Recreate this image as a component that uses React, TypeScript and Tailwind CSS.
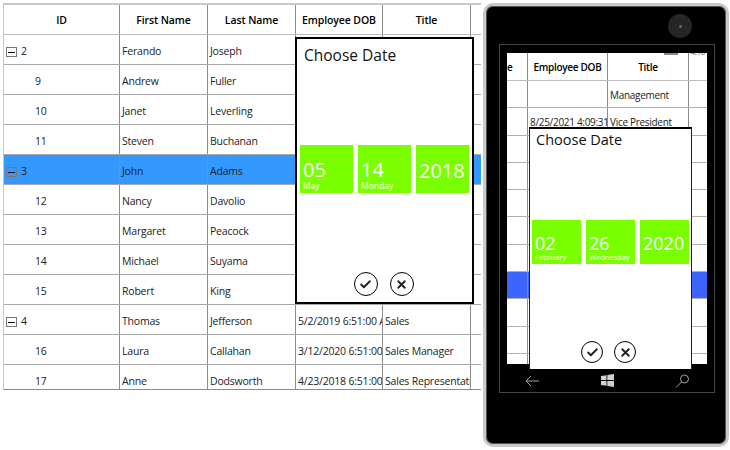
import { Check, X } from "lucide-react";

const rows = [
  { id: "2", first: "Ferando", last: "Joseph", dob: "", title: "", parent: true },
  { id: "9", first: "Andrew", last: "Fuller", dob: "", title: "" },
  { id: "10", first: "Janet", last: "Leverling", dob: "", title: "" },
  { id: "11", first: "Steven", last: "Buchanan", dob: "", title: "" },
  { id: "3", first: "John", last: "Adams", dob: "", title: "", parent: true, selected: true },
  { id: "12", first: "Nancy", last: "Davolio", dob: "", title: "" },
  { id: "13", first: "Margaret", last: "Peacock", dob: "", title: "" },
  { id: "14", first: "Michael", last: "Suyama", dob: "", title: "" },
  { id: "15", first: "Robert", last: "King", dob: "", title: "" },
  { id: "4", first: "Thomas", last: "Jefferson", dob: "5/2/2019 6:51:00 AM", title: "Sales", parent: true },
  { id: "16", first: "Laura", last: "Callahan", dob: "3/12/2020 6:51:00 AM", title: "Sales Manager" },
  { id: "17", first: "Anne", last: "Dodsworth", dob: "4/23/2018 6:51:00 AM", title: "Sales Representative" },
];

const phoneRows = [
  { title: "Management" },
  { dob: "8/25/2021 4:09:31 PM", title: "Vice President" },
  {},
  {},
  {},
  {},
  {},
  { selected: true },
  {},
  {},
  {},
];

function Cell({ className, children }: { className: string; children?: React.ReactNode }) {
  return (
    <div className={`flex h-full shrink-0 items-center overflow-hidden whitespace-nowrap border-r border-[#8c8c8c] pl-[2px] ${className}`}>
      {children}
    </div>
  );
}

function Tile({ value, label, size }: { value: string; label?: string; size: "lg" | "sm" }) {
  const big = size === "lg";
  return (
    <div className={`flex flex-col justify-end bg-[#7aff00] pl-[3px] text-white ${big ? "h-[48px] w-[53px] pb-[3px]" : "h-[44px] w-[49px] pb-[3px]"}`}>
      <span className={`leading-none ${label ? "" : "pb-[9px]"} ${big ? "text-[20px]" : "text-[18px]"}`}>{value}</span>
      {label && <span className={`mt-[2px] leading-none opacity-90 ${big ? "text-[8.5px]" : "text-[7.5px]"}`}>{label}</span>}
    </div>
  );
}

function RoundButton({ icon, size }: { icon: "check" | "x"; size: number }) {
  const box = size === 24 ? "h-6 w-6" : "h-[22px] w-[22px]";
  return (
    <button className={`flex items-center justify-center rounded-full border-[1.5px] border-black bg-white ${box}`}>
      {icon === "check" ? <Check size={13} strokeWidth={3.5} /> : <X size={13} strokeWidth={3.5} />}
    </button>
  );
}

function MainGrid() {
  return (
    <div className="relative ml-[3px] mt-[3px] h-[387px] w-[478px] shrink-0 overflow-hidden border-b border-l border-t-2 border-b-[#8c8c8c] border-l-[#c8c8c8] border-t-[#c8c8c8] text-[10.5px] tracking-[-0.2px] text-[#222]">
      <div className="flex h-[30px] items-center border-b border-[#bdbdbd] text-center font-semibold tracking-[-0.1px] text-black">
        <div className="h-full w-[116px] border-r border-[#8c8c8c] leading-[30px]">ID</div>
        <div className="h-full w-[88px] border-r border-[#8c8c8c] leading-[30px]">First Name</div>
        <div className="h-full w-[88px] border-r border-[#8c8c8c] leading-[30px]">Last Name</div>
        <div className="h-full w-[87px] border-r border-[#8c8c8c] leading-[30px]">Employee DOB</div>
        <div className="h-full w-[88px] border-r border-[#8c8c8c] leading-[30px]">Title</div>
      </div>
      {rows.map((r) => (
        <div key={r.id} className={`flex h-[30px] shrink-0 border-b border-[#a8a8a8] pt-[0px] ${r.selected ? "bg-[#3399ff]" : "bg-white"}`}>
          <div className={`flex h-full w-[116px] shrink-0 items-center border-r border-[#8c8c8c] pt-[5px] ${r.parent ? "pl-[2px]" : "pl-[31px]"}`}>
            {r.parent && (
              <span className="mr-[4px] flex h-[10px] w-[11px] items-center justify-center border border-[#777]">
                <span className="h-px w-[7px] bg-black" />
              </span>
            )}
            {r.id}
          </div>
          <Cell className="w-[88px] pt-[5px]">{r.first}</Cell>
          <Cell className="w-[88px] pt-[5px]">{r.last}</Cell>
          <Cell className="w-[87px] pt-[5px]">{r.dob}</Cell>
          <Cell className="w-[88px] pt-[5px]">{r.title}</Cell>
        </div>
      ))}

      <div className="absolute left-[291px] top-[32px] flex h-[267px] w-[179px] flex-col border-2 border-black bg-white tracking-normal">
        <div className="pl-[7px] pt-[5px] text-[15.5px] leading-[22px] text-[#111]">Choose Date</div>
        <div className="mt-[79px] flex justify-between px-[3px]">
          <Tile value="05" label="May" size="lg" />
          <Tile value="14" label="Monday" size="lg" />
          <Tile value="2018" size="lg" />
        </div>
        <div className="mt-auto flex justify-center gap-3 pb-[6px] pr-[2px]">
          <RoundButton icon="check" size={24} />
          <RoundButton icon="x" size={24} />
        </div>
      </div>
    </div>
  );
}

function NavIcons() {
  return (
    <div className="flex h-[23px] items-center justify-between pl-[25px] pr-[24px]">
      <svg width="15" height="12" viewBox="0 0 15 12" fill="none" stroke="#a0a0a0" strokeWidth="1">
        <path d="M14 6H1M6 1 1 6l5 5" />
      </svg>
      <svg width="13" height="13" viewBox="0 0 13 13" fill="#d0d0d0">
        <path d="M0 2 5.5 1.2V6H0zM6.3 1 13 0v6H6.3zM0 7h5.5v4.8L0 11zM6.3 7H13v6l-6.7-1z" />
      </svg>
      <svg width="15" height="14" viewBox="0 0 15 14" fill="none" stroke="#a0a0a0" strokeWidth="1">
        <circle cx="9.5" cy="5" r="4" />
        <path d="M6.5 8 1 13.5" />
      </svg>
    </div>
  );
}

function Phone() {
  return (
    <div className="ml-[2px] mt-[3px] h-[444px] w-[246px] shrink-0 rounded-[10px] border-[3px] border-[#c9c9c9] bg-black shadow-[inset_0_0_0_1px_#555]">
      <div className="flex h-[38px] justify-end pr-[34px] pt-[8px]">
        <div className="flex h-6 w-6 items-center justify-center rounded-full bg-[#262626]">
          <div className="h-[3px] w-[3px] rounded-full bg-[#2f7f9f]" />
        </div>
      </div>
      <div className="relative mx-[13px] h-[349px] w-[216px] border border-[#444] px-[7px] pt-[8px] text-[10px] tracking-[-0.3px] text-[#222]">
        <div className="relative h-[311px] w-[200px] overflow-hidden bg-white">
          <div className="flex h-[28px] border-b border-[#bdbdbd] text-center font-semibold text-black">
            <div className="h-full w-[21px] shrink-0 overflow-hidden border-r border-[#8c8c8c] text-left leading-[29px]">e</div>
            <div className="h-full w-[80px] shrink-0 border-r border-[#8c8c8c] leading-[29px]">Employee DOB</div>
            <div className="h-full w-[81px] shrink-0 border-r border-[#8c8c8c] leading-[29px]">Title</div>
          </div>
          {phoneRows.map((r, i) => (
            <div key={i} className={`flex h-[27.3px] border-b border-[#b0b0b0] ${r.selected ? "bg-[#3d64ff]" : ""}`}>
              <div className="h-full w-[21px] shrink-0 border-r border-[#8c8c8c]" />
              <Cell className="w-[80px] pt-[3px]">{r.dob}</Cell>
              <Cell className="w-[81px] pt-[3px]">{r.title}</Cell>
            </div>
          ))}
          <div className="absolute inset-x-0 top-0 flex h-[3px] justify-end gap-[12px] overflow-hidden pr-[2px] text-[8px] leading-[3px] text-[#555]">
            <div className="h-[2px] w-[14px] bg-[#888]" />
            <span className="-mt-[3px]">4:10</span>
          </div>
        </div>
        <div className="absolute left-[29px] top-[82px] flex h-[242px] w-[163px] flex-col border-x border-t-2 border-x-[#222] border-t-black bg-white tracking-normal">
          <div className="pl-[6px] pt-[1px] text-[14.5px] leading-[20px] text-[#111]">Choose Date</div>
          <div className="mt-[70px] flex justify-between px-[2px]">
            <Tile value="02" label="February" size="sm" />
            <Tile value="26" label="Wednesday" size="sm" />
            <Tile value="2020" size="sm" />
          </div>
          <div className="mt-auto flex justify-center gap-[11px] pb-[6px] pr-[4px]">
            <RoundButton icon="check" size={22} />
            <RoundButton icon="x" size={22} />
          </div>
        </div>
        <div className="absolute inset-x-0 bottom-0">
          <NavIcons />
        </div>
      </div>
    </div>
  );
}

export default function App() {
  return (
    <div className="flex h-[450px] w-[730px] items-start overflow-hidden bg-white font-['Open_Sans','Noto_Sans',sans-serif]">
      <MainGrid />
      <Phone />
    </div>
  );
}
